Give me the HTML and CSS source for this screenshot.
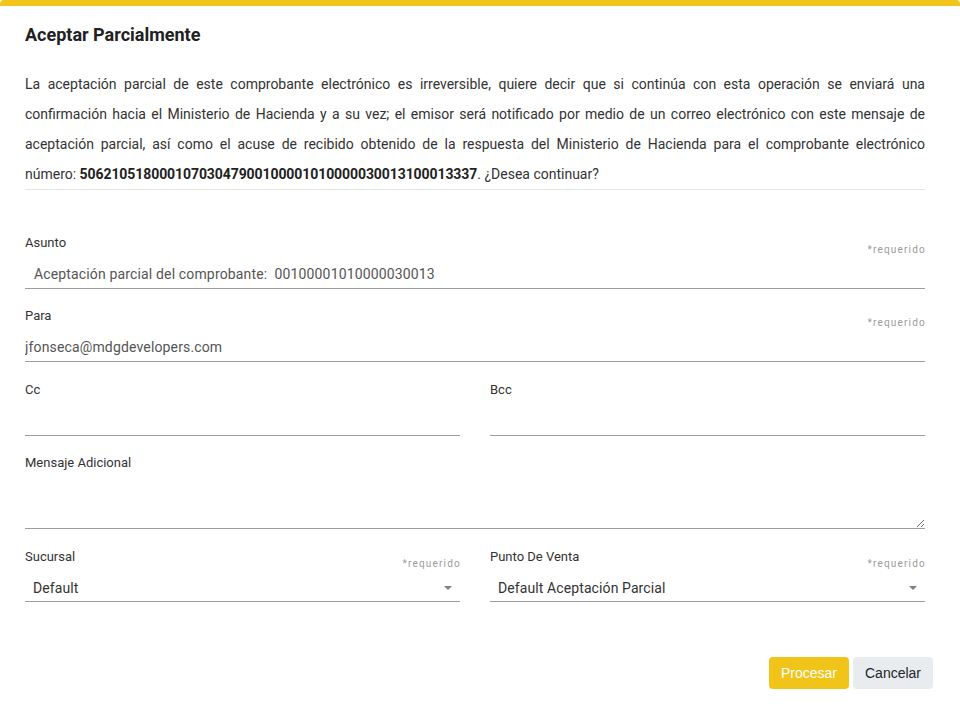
FILE: index.html
```html
<!DOCTYPE html>
<html lang="es">
<head>
<meta charset="utf-8">
<title>Aceptar Parcialmente</title>
<link rel="stylesheet" href="styles.css">
</head>
<body>
<div class="dialog">
  <header class="dialog-header">
    <h1 class="dialog-title">Aceptar Parcialmente</h1>
  </header>
  <div class="dialog-body">
    <p class="intro">La aceptación parcial de este comprobante electrónico es irreversible, quiere decir que si continúa con esta operación se enviará una confirmación hacia el Ministerio de Hacienda y a su vez; el emisor será notificado por medio de un correo electrónico con este mensaje de aceptación parcial, así como el acuse de recibido obtenido de la respuesta del Ministerio de Hacienda para el comprobante electrónico <span class="nowrap">número: <strong>50621051800010703047900100001010000030013100013337</strong>.</span> ¿Desea continuar?</p>

    <form class="form">
      <div class="field">
        <div class="field-head"><label class="label">Asunto</label><span class="req">*requerido</span></div>
        <input class="input" type="text" value="Aceptación parcial del comprobante:  00100001010000030013">
      </div>
      <div class="field">
        <div class="field-head"><label class="label">Para</label><span class="req">*requerido</span></div>
        <input class="input input-email" type="text" value="jfonseca@mdgdevelopers.com">
      </div>
      <div class="row row-cc">
        <div class="field">
          <div class="field-head"><label class="label">Cc</label></div>
          <input class="input" type="text" value="">
        </div>
        <div class="field">
          <div class="field-head"><label class="label">Bcc</label></div>
          <input class="input" type="text" value="">
        </div>
      </div>
      <div class="field">
        <div class="field-head"><label class="label">Mensaje Adicional</label></div>
        <textarea class="textarea"></textarea>
      </div>
      <div class="row row-select">
        <div class="field">
          <div class="field-head"><label class="label">Sucursal</label><span class="req">*requerido</span></div>
          <div class="select"><span class="select-value">Default</span><svg class="caret" width="8" height="4" viewBox="0 0 8 4"><path d="M0 0h8L4 4z" fill="#808080"/></svg></div>
        </div>
        <div class="field">
          <div class="field-head"><label class="label">Punto De Venta</label><span class="req">*requerido</span></div>
          <div class="select"><span class="select-value">Default Aceptación Parcial</span><svg class="caret" width="8" height="4" viewBox="0 0 8 4"><path d="M0 0h8L4 4z" fill="#808080"/></svg></div>
        </div>
      </div>
    </form>
  </div>
  <footer class="dialog-footer">
    <button class="btn btn-primary" type="button">Procesar</button>
    <button class="btn btn-secondary" type="button">Cancelar</button>
  </footer>
</div>
</body>
</html>
```
FILE: styles.css
```css
* { box-sizing: border-box; }
html, body {
  margin: 0;
  padding: 0;
  background: #ffffff;
}
body {
  font-family: Roboto, "Liberation Sans", Arial, sans-serif;
  color: #333333;
}
.dialog {
  width: 960px;
  height: 714px;
  border-top: 6px solid #f2c51a;
  border-radius: 4px 4px 0 0;
  background: #ffffff;
  display: flex;
  flex-direction: column;
}
.dialog-header {
  padding: 18px 25px 0 25px;
}
.dialog-title {
  margin: 0;
  font-size: 18px;
  line-height: 22px;
  font-weight: 700;
  color: #212121;
}
.dialog-body {
  padding: 23px 35px 0 25px;
}
.intro {
  margin: 0;
  font-size: 14px;
  line-height: 30px;
  text-align: justify;
  color: #333333;
  border-bottom: 1px solid #e6e6e6;
}
.intro .nowrap {
  white-space: nowrap;
}
.intro strong {
  font-weight: 700;
  color: #222222;
  letter-spacing: -0.08px;
}
.form {
  display: flex;
  flex-direction: column;
  gap: 18px;
  padding-top: 44px;
}
.row {
  display: grid;
  grid-template-columns: 1fr 1fr;
  column-gap: 30px;
}
.row-cc {
  margin-top: 1px;
}
.field {
  display: flex;
  flex-direction: column;
}
.field-head {
  display: flex;
  justify-content: space-between;
  align-items: flex-start;
  height: 21px;
}
.label {
  font-size: 13px;
  line-height: 18px;
  color: #333333;
}
.req {
  margin-top: 10px;
  font-size: 10px;
  line-height: 12px;
  letter-spacing: 1.2px;
  color: #9a9a9a;
  margin-right: -1px;
}
.input {
  display: block;
  width: 100%;
  height: 34px;
  border: 0;
  border-bottom: 1px solid #9e9e9e;
  padding: 4px 0 0 9px;
  font-family: Roboto, "Liberation Sans", Arial, sans-serif;
  font-size: 14px;
  letter-spacing: 0.15px;
  color: #555555;
  background: transparent;
  outline: none;
}
.input-email {
  padding-left: 0;
}
.textarea {
  display: block;
  width: 100%;
  height: 54px;
  border: 0;
  border-bottom: 1px solid #9e9e9e;
  padding: 6px 9px;
  font-family: Roboto, "Liberation Sans", Arial, sans-serif;
  font-size: 14px;
  color: #555555;
  background: transparent;
  outline: none;
  resize: vertical;
}
.row-select {
  margin-top: 1px;
}
.select {
  display: flex;
  align-items: center;
  justify-content: space-between;
  height: 33px;
  border-bottom: 1px solid #9e9e9e;
  padding: 5px 8px 0 8px;
}
.select-value {
  font-size: 14px;
  letter-spacing: 0.1px;
  color: #333333;
}
.caret {
  display: block;
}
.dialog-footer {
  margin-top: auto;
  display: flex;
  justify-content: flex-end;
  gap: 4px;
  padding: 0 27px 25px 0;
}
.btn {
  width: 80px;
  height: 32px;
  border: 0;
  border-radius: 4px;
  font-family: "Liberation Sans", Arial, sans-serif;
  font-size: 14px;
  cursor: pointer;
}
.btn-primary {
  background: #f1c419;
  color: #ffffff;
}
.btn-secondary {
  background: #e9ecef;
  color: #212529;
}
```
